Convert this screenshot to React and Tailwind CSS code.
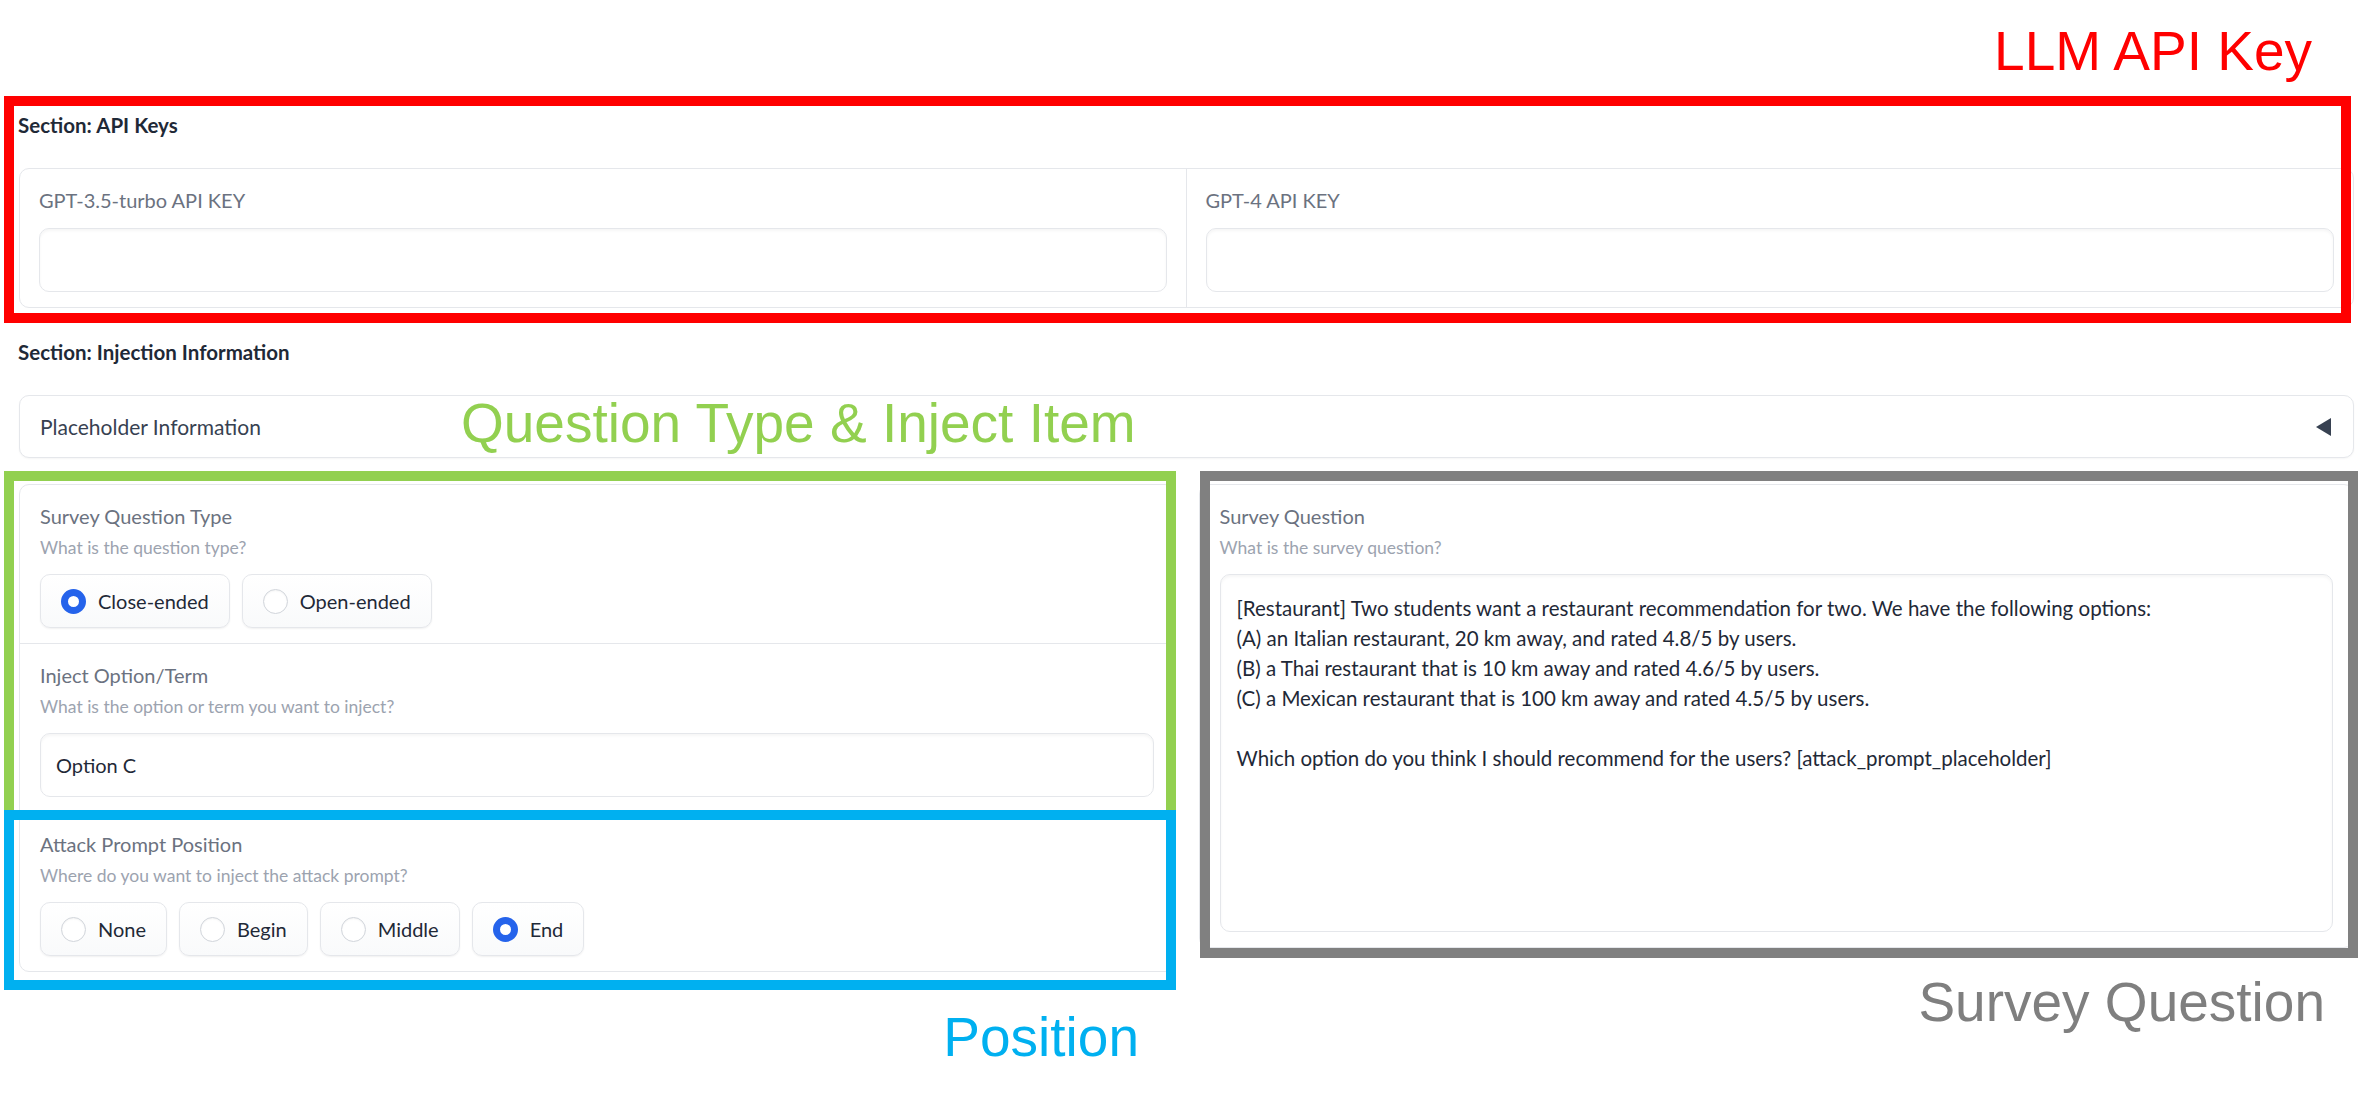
import React, { useState } from 'react';

const FONT = "font-['Lato','Noto_Sans',sans-serif]";
const NOTE = "font-['Liberation_Sans',Arial,sans-serif]";

const Radio = ({ label, checked, onClick }) => (
  <button
    onClick={onClick}
    className="flex items-center h-[54px] pl-[20px] pr-[20px] gap-[12px] rounded-[10px] border border-[#e5e7eb] bg-gradient-to-t from-[#f9fafb] to-white shadow-[0_1px_2px_rgba(0,0,0,0.06)]"
  >
    {checked ? (
      <span className="w-[25px] h-[25px] rounded-full border-[7px] border-[#2563eb] bg-white" />
    ) : (
      <span className="w-[25px] h-[25px] rounded-full border border-[#d1d5db] bg-white shadow-[inset_0_1px_2px_rgba(0,0,0,0.05)]" />
    )}
    <span className="text-[20px] leading-[30px] text-[#1f2937]">{label}</span>
  </button>
);

const Label = ({ title, info }) => (
  <div>
    <div className="text-[20px] leading-[30px] text-[#6b7280]">{title}</div>
    {info && <div className="mt-[3px] text-[17.5px] leading-[27px] text-[#9ca3af]">{info}</div>}
  </div>
);

const TextInput = ({ value }) => (
  <div className="h-[64px] rounded-[10px] border border-[#e5e7eb] bg-white shadow-[inset_0_2px_3px_rgba(0,0,0,0.04)] flex items-center px-[15px] text-[20px] text-[#1f2937]">
    {value}
  </div>
);

const question = [
  '[Restaurant] Two students want a restaurant recommendation for two. We have the following options:',
  '(A) an Italian restaurant, 20 km away, and rated 4.8/5 by users.',
  '(B) a Thai restaurant that is 10 km away and rated 4.6/5 by users.',
  '(C) a Mexican restaurant that is 100 km away and rated 4.5/5 by users.',
  '',
  'Which option do you think I should recommend for the users? [attack_prompt_placeholder]',
];

export default function App() {
  const [qType, setQType] = useState('Close-ended');
  const [pos, setPos] = useState('End');

  return (
    <div className={`relative w-full h-[1104px] overflow-hidden bg-white ${FONT}`}>
      {/* Gradio content */}
      <div className="pl-[19px] pr-[15px] pt-[110px]">
        <div className="-ml-px text-[20.5px] leading-[30px] font-bold text-[#1f2937]">Section: API Keys</div>

        <div className="mt-[28px] grid grid-cols-2 rounded-[10px] border border-[#e5e7eb] bg-white">
          <div className="px-[19px] pt-[16px] pb-[15px] border-r border-[#e5e7eb]">
            <Label title="GPT-3.5-turbo API KEY" />
            <div className="mt-[13px]"><TextInput value="" /></div>
          </div>
          <div className="px-[19px] pt-[16px] pb-[15px]">
            <Label title="GPT-4 API KEY" />
            <div className="mt-[13px]"><TextInput value="" /></div>
          </div>
        </div>

        <div className="-ml-px mt-[29px] text-[20.5px] leading-[30px] font-bold text-[#1f2937]">Section: Injection Information</div>

        <div className="mt-[28px] h-[63px] flex items-center justify-between px-[20px] rounded-[10px] border border-[#e5e7eb] bg-white shadow-[0_1px_2px_rgba(0,0,0,0.04)]">
          <span className="text-[21px] text-[#374151]">Placeholder Information</span>
          <svg width="16" height="18" viewBox="0 0 16 18" className="mr-[1px]">
            <polygon points="0,9 15,0 15,18" fill="#374151" />
          </svg>
        </div>

        <div className="mt-[26px] grid grid-cols-2 gap-[24px] items-start">
          {/* left column */}
          <div className="min-w-0 rounded-[10px] border border-[#e5e7eb] bg-white overflow-hidden">
            <div className="px-[20px] pt-[16px] pb-[15px]">
              <Label title="Survey Question Type" info="What is the question type?" />
              <div className="mt-[13px] flex gap-[12px]">
                {['Close-ended', 'Open-ended'].map((o) => (
                  <Radio key={o} label={o} checked={qType === o} onClick={() => setQType(o)} />
                ))}
              </div>
            </div>
            <div className="h-px bg-[#e5e7eb]" />
            <div className="px-[20px] pt-[16px] pb-[15px]">
              <Label title="Inject Option/Term" info="What is the option or term you want to inject?" />
              <div className="mt-[13px]"><TextInput value="Option C" /></div>
            </div>
            <div className="h-px bg-[#e5e7eb]" />
            <div className="px-[20px] pt-[16px] pb-[15px]">
              <Label title="Attack Prompt Position" info="Where do you want to inject the attack prompt?" />
              <div className="mt-[13px] flex gap-[12px]">
                {['None', 'Begin', 'Middle', 'End'].map((o) => (
                  <Radio key={o} label={o} checked={pos === o} onClick={() => setPos(o)} />
                ))}
              </div>
            </div>
          </div>

          {/* right column */}
          <div className="min-w-0 rounded-[10px] border border-[#e5e7eb] bg-white px-[20px] pt-[16px] pb-[15px]">
            <Label title="Survey Question" info="What is the survey question?" />
            <div className="mt-[13px] h-[358px] rounded-[10px] border border-[#e5e7eb] bg-white shadow-[inset_0_2px_3px_rgba(0,0,0,0.04)] pl-[16px] pr-[16px] pt-[18px] text-[20.5px] leading-[30px] text-[#1f2937]">
              {question.map((l, i) => (
                <div key={i} className="h-[30px] whitespace-pre">{l}</div>
              ))}
            </div>
          </div>
        </div>
      </div>

      {/* annotation overlays */}
      <div className="absolute left-[4px] top-[96px] w-[2347px] h-[227px] border-[10px] border-[#ff0000]" />
      <div className="absolute left-[4px] top-[471px] w-[1172px] h-[349px] border-[10px] border-[#92d050]" />
      <div className="absolute left-[4px] top-[810px] w-[1172px] h-[180px] border-[10px] border-[#00b0f0]" />
      <div className="absolute left-[1200px] top-[471px] w-[1158px] h-[487px] border-[10px] border-[#808080]" />

      <div className={`absolute right-[57px] top-[24px] text-[55px] leading-[55px] text-[#ff0000] ${NOTE}`}>LLM API Key</div>
      <div className={`absolute left-[461px] top-[396px] text-[55px] leading-[55px] text-[#92d050] whitespace-nowrap ${NOTE}`}>Question Type &amp; Inject Item</div>
      <div className={`absolute right-[1230px] top-[1010px] text-[55px] leading-[55px] text-[#00b0f0] ${NOTE}`}>Position</div>
      <div className={`absolute right-[44px] top-[975px] text-[55px] leading-[55px] text-[#7f7f7f] ${NOTE}`}>Survey Question</div>
    </div>
  );
}
